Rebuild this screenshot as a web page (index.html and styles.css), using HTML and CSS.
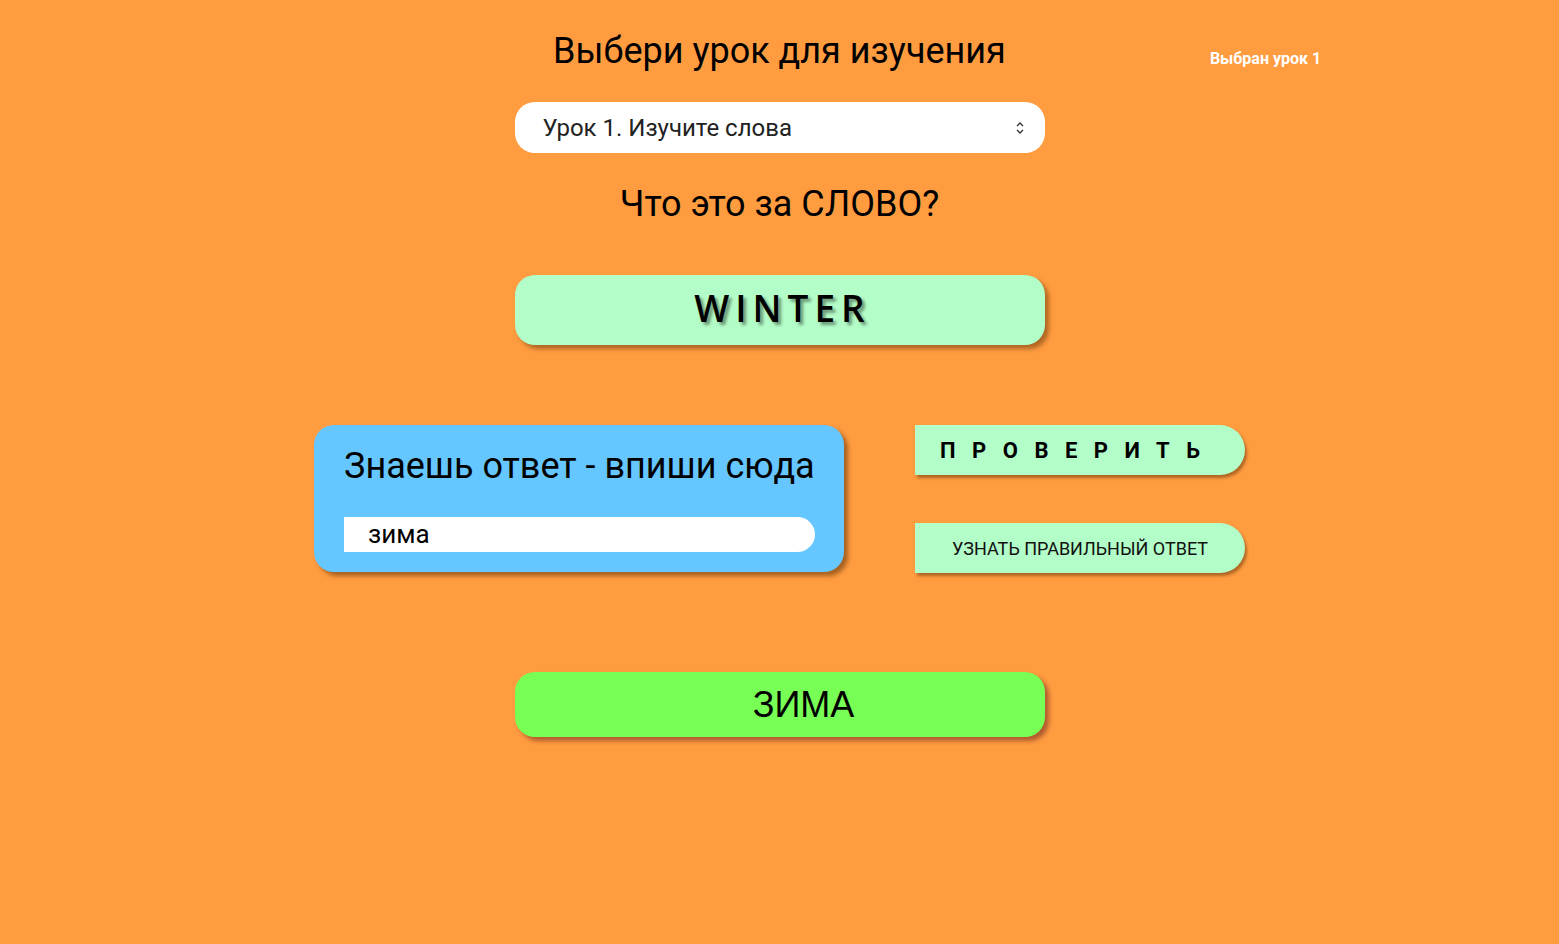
FILE: index.html
```html
<!DOCTYPE html>
<html lang="ru">
<head>
<meta charset="utf-8">
<title>Выбери урок</title>
<link rel="stylesheet" href="styles.css">
</head>
<body>
<div class="page">
  <header class="header">
    <div></div>
    <h1 class="title">Выбери урок для изучения</h1>
    <div class="status">Выбран урок 1</div>
  </header>
  <div class="select">
    <span>Урок 1. Изучите слова</span>
    <svg class="arrows" width="10" height="14" viewBox="0 0 10 14"><path d="M2 5 L5 2 L8 5 M2 9 L5 12 L8 9" fill="none" stroke="#333" stroke-width="1.4"/></svg>
  </div>
  <h2 class="question">Что это за СЛОВО?</h2>
  <div class="word">WINTER</div>
  <div class="row">
    <div class="card">
      <div class="card-title">Знаешь ответ - впиши сюда</div>
      <div class="input">зима</div>
    </div>
    <div class="buttons">
      <div class="btn btn-check">ПРОВЕРИТЬ</div>
      <div class="btn btn-answer">УЗНАТЬ ПРАВИЛЬНЫЙ ОТВЕТ</div>
    </div>
  </div>
  <div class="result">ЗИМА</div>
</div>
</body>
</html>
```
FILE: styles.css
```css
html, body {
  margin: 0;
  padding: 0;
  background: #ff9c40;
  font-family: Roboto, "Noto Sans", sans-serif;
  color: #000;
}
.page {
  width: 1559px;
  height: 944px;
  display: flex;
  flex-direction: column;
  align-items: center;
}
.header {
  width: 100%;
  display: grid;
  grid-template-columns: 1fr auto 1fr;
  align-items: center;
  margin-top: 28px;
}
.title {
  margin: 0;
  font-weight: 400;
  font-size: 36px;
  line-height: 46px;
}
.status {
  margin-left: 204px;
  color: #fff;
  font-weight: 700;
  font-size: 16px;
  padding-top: 14px;
}
.select {
  margin-top: 28px;
  width: 530px;
  height: 51px;
  box-sizing: border-box;
  background: #fff;
  border-radius: 20px;
  display: flex;
  align-items: center;
  justify-content: space-between;
  padding: 0 20px 0 28px;
  font-size: 24px;
  color: #222;
}
.arrows { display: block; }
.question {
  margin: 28px 0 0;
  font-weight: 400;
  font-size: 36px;
  line-height: 46px;
}
.word {
  margin-top: 48px;
  width: 530px;
  height: 70px;
  box-sizing: border-box;
  padding: 0 0 5px 6px;
  background: #b3fdc8;
  border-radius: 20px;
  box-shadow: 4px 4px 4px rgba(80, 40, 0, 0.45);
  display: flex;
  align-items: center;
  justify-content: center;
  font-family: "Open Sans", sans-serif;
  font-weight: 600;
  font-size: 37px;
  letter-spacing: 6px;
  text-shadow: 3px 3px 3px rgba(0, 0, 0, 0.4);
}
.row {
  margin-top: 80px;
  display: flex;
  gap: 71px;
  align-items: flex-start;
}
.card {
  width: 530px;
  height: 147px;
  box-sizing: border-box;
  background: #66c6ff;
  border-radius: 20px;
  box-shadow: 4px 4px 4px rgba(80, 40, 0, 0.5);
  padding: 20px 29px 0 30px;
}
.card-title {
  font-size: 36px;
  line-height: 42px;
}
.input {
  margin-top: 30px;
  height: 35px;
  background: #fff;
  border-radius: 0 18px 18px 0;
  padding-left: 24px;
  font-size: 26px;
  line-height: 35px;
}
.buttons {
  display: flex;
  flex-direction: column;
  gap: 48px;
}
.btn {
  width: 330px;
  height: 50px;
  box-sizing: border-box;
  background: #b3fdc8;
  border-radius: 0 25px 25px 0;
  box-shadow: 2px 3px 3px rgba(80, 40, 0, 0.45);
  display: flex;
  align-items: center;
}
.btn-check {
  padding-left: 25px;
  font-weight: 700;
  font-size: 22px;
  letter-spacing: 16.5px;
}
.btn-answer {
  justify-content: center;
  font-size: 18px;
  color: #111;
}
.result {
  margin-top: 99px;
  width: 530px;
  height: 65px;
  box-sizing: border-box;
  padding-left: 48px;
  background: #77ff55;
  border-radius: 20px;
  box-shadow: 4px 4px 4px rgba(100, 30, 30, 0.5);
  display: flex;
  align-items: center;
  justify-content: center;
  font-family: "Liberation Sans", Arial, sans-serif;
  font-size: 36px;
}
```
